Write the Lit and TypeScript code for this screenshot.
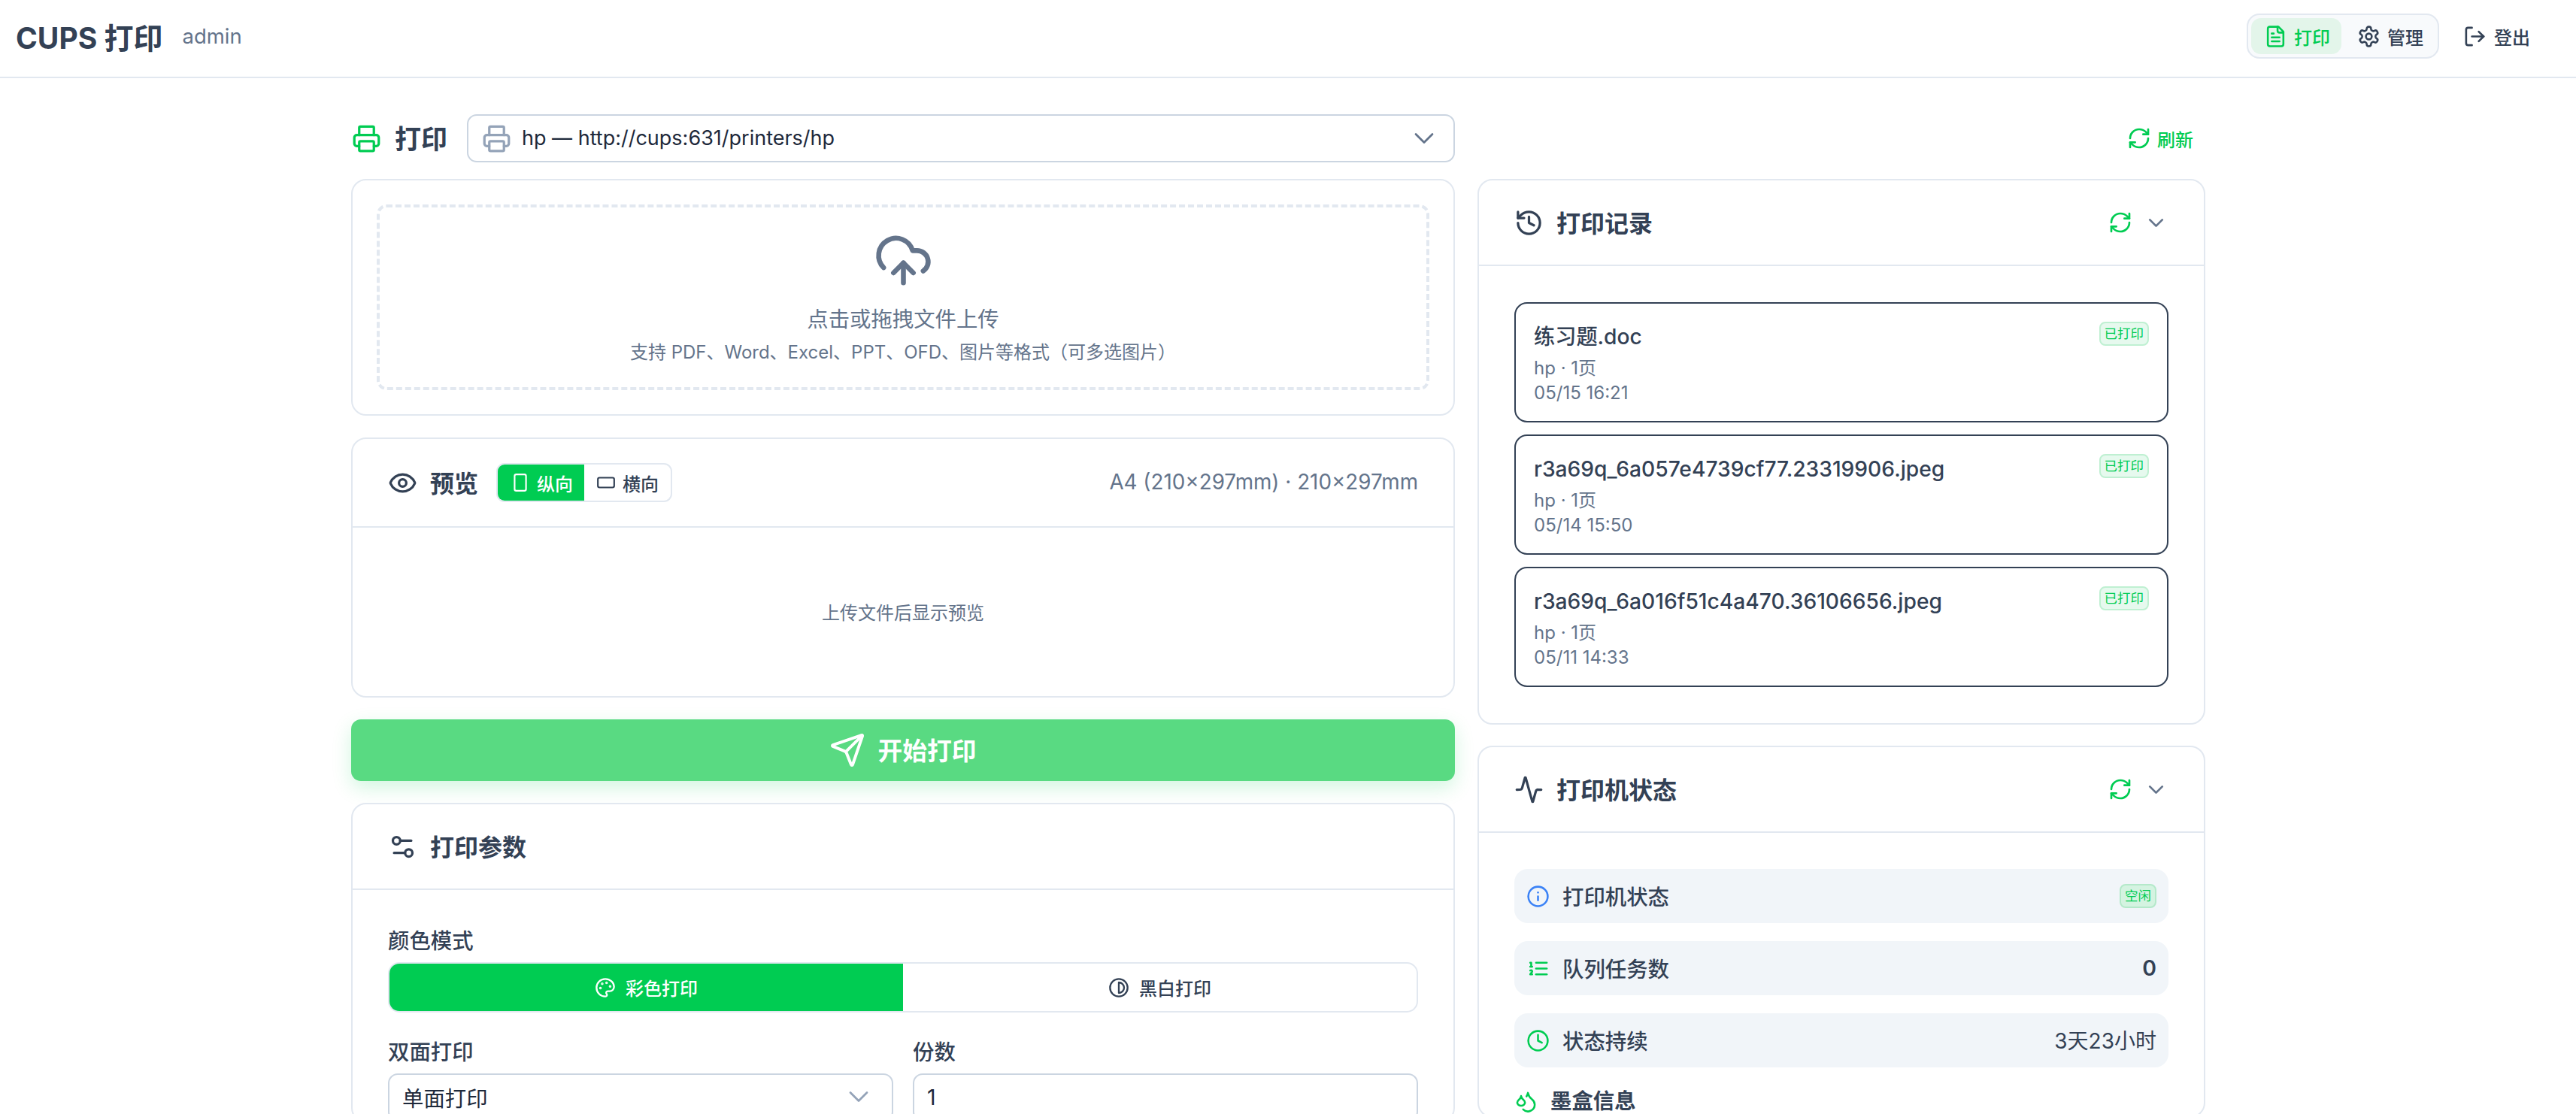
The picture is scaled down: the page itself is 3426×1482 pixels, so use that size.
import { LitElement, html, css, svg } from 'lit';
import { customElement } from 'lit/decorators.js';

const ICONS = {
    printer: svg`<path d="M6 18H4a2 2 0 0 1-2-2v-5a2 2 0 0 1 2-2h16a2 2 0 0 1 2 2v5a2 2 0 0 1-2 2h-2"/><path d="M6 9V3a1 1 0 0 1 1-1h10a1 1 0 0 1 1 1v6"/><rect x="6" y="14" width="12" height="8" rx="1"/>`,
    file: svg`<path d="M15 2H6a2 2 0 0 0-2 2v16a2 2 0 0 0 2 2h12a2 2 0 0 0 2-2V7Z"/><path d="M14 2v4a2 2 0 0 0 2 2h4"/><path d="M10 9H8"/><path d="M16 13H8"/><path d="M16 17H8"/>`,
    gear: svg`<path d="M12.22 2h-.44a2 2 0 0 0-2 2v.18a2 2 0 0 1-1 1.73l-.43.25a2 2 0 0 1-2 0l-.15-.08a2 2 0 0 0-2.73.73l-.22.38a2 2 0 0 0 .73 2.73l.15.1a2 2 0 0 1 1 1.72v.51a2 2 0 0 1-1 1.74l-.15.09a2 2 0 0 0-.73 2.73l.22.38a2 2 0 0 0 2.73.73l.15-.08a2 2 0 0 1 2 0l.43.25a2 2 0 0 1 1 1.73V20a2 2 0 0 0 2 2h.44a2 2 0 0 0 2-2v-.18a2 2 0 0 1 1-1.73l.43-.25a2 2 0 0 1 2 0l.15.08a2 2 0 0 0 2.73-.73l.22-.39a2 2 0 0 0-.73-2.73l-.15-.08a2 2 0 0 1-1-1.74v-.5a2 2 0 0 1 1-1.74l.15-.09a2 2 0 0 0 .73-2.73l-.22-.38a2 2 0 0 0-2.73-.73l-.15.08a2 2 0 0 1-2 0l-.43-.25a2 2 0 0 1-1-1.73V4a2 2 0 0 0-2-2z"/><circle cx="12" cy="12" r="3"/>`,
    logout: svg`<path d="m16 17 5-5-5-5"/><path d="M21 12H9"/><path d="M9 21H5a2 2 0 0 1-2-2V5a2 2 0 0 1 2-2h4"/>`,
    refresh: svg`<path d="M3 12a9 9 0 0 1 9-9 9.75 9.75 0 0 1 6.74 2.74L21 8"/><path d="M21 3v5h-5"/><path d="M21 12a9 9 0 0 1-9 9 9.75 9.75 0 0 1-6.74-2.74L3 16"/><path d="M8 16H3v5"/>`,
    chevron: svg`<path d="m6 9 6 6 6-6"/>`,
    upload: svg`<path d="M12 13v8"/><path d="M4 14.899A7 7 0 1 1 15.71 8h1.79a4.5 4.5 0 0 1 2.5 8.242"/><path d="m8 17 4-4 4 4"/>`,
    eye: svg`<path d="M2.062 12.348a1 1 0 0 1 0-.696 10.75 10.75 0 0 1 19.876 0 1 1 0 0 1 0 .696 10.75 10.75 0 0 1-19.876 0"/><circle cx="12" cy="12" r="3"/>`,
    phone: svg`<rect x="5" y="2" width="14" height="20" rx="2"/>`,
    landscape: svg`<rect x="2" y="6" width="20" height="12" rx="2"/>`,
    send: svg`<path d="M14.536 21.686a.5.5 0 0 0 .937-.024l6.5-19a.496.496 0 0 0-.635-.635l-19 6.5a.5.5 0 0 0-.024.937l7.93 3.18a2 2 0 0 1 1.112 1.11z"/><path d="m21.854 2.147-10.94 10.939"/>`,
    sliders: svg`<path d="M14 17H5"/><path d="M19 7h-9"/><circle cx="17" cy="17" r="3"/><circle cx="7" cy="7" r="3"/>`,
    palette: svg`<path d="M12 22a1 1 0 0 1 0-20 10 9 0 0 1 10 9 5 5 0 0 1-5 5h-2.25a1.75 1.75 0 0 0-1.4 2.8l.3.4a1.75 1.75 0 0 1-1.4 2.8z"/><circle cx="13.5" cy="6.5" r=".5" fill="currentColor"/><circle cx="17.5" cy="10.5" r=".5" fill="currentColor"/><circle cx="6.5" cy="12.5" r=".5" fill="currentColor"/><circle cx="8.5" cy="7.5" r=".5" fill="currentColor"/>`,
    contrast: svg`<circle cx="12" cy="12" r="10"/><path d="M12 18a6 6 0 0 0 0-12v12z"/>`,
    history: svg`<path d="M3 12a9 9 0 1 0 9-9 9.75 9.75 0 0 0-6.74 2.74L3 8"/><path d="M3 3v5h5"/><path d="M12 7v5l4 2"/>`,
    activity: svg`<path d="M22 12h-2.48a2 2 0 0 0-1.93 1.46l-2.35 8.36a.25.25 0 0 1-.48 0L9.24 2.18a.25.25 0 0 0-.48 0l-2.35 8.36A2 2 0 0 1 4.49 12H2"/>`,
    info: svg`<circle cx="12" cy="12" r="10"/><path d="M12 16v-4"/><path d="M12 8h.01"/>`,
    list: svg`<path d="M10 12h11"/><path d="M10 18h11"/><path d="M10 6h11"/><path d="M4 10h2"/><path d="M4 6h1v4"/><path d="M6 18H4c0-1 2-2 2-3s-1-1.5-2-1"/>`,
    clock: svg`<circle cx="12" cy="12" r="10"/><path d="M12 6v6l4 2"/>`,
    droplets: svg`<path d="M7 16.3c2.2 0 4-1.83 4-3.05 0-1.16-.57-2.26-1.71-3.19S7.29 7.75 7 6.3c-.29 1.45-1.14 2.84-2.29 3.76S3 12.09 3 13.25c0 1.22 1.8 3.05 4 3.05z"/><path d="M12.56 6.6A10.97 10.97 0 0 0 14 3.02c.5 2.5 2 4.9 4 6.5s3 3.5 3 5.5a6.98 6.98 0 0 1-11.91 4.97"/>`,
};

const icon = (name: keyof typeof ICONS, cls = '') => html`
    <svg class="ic ${cls}" viewBox="0 0 24 24" fill="none" stroke="currentColor" stroke-width="2"
        stroke-linecap="round" stroke-linejoin="round">${ICONS[name]}</svg>
`;

const RECORDS = [
    { name: '练习题.doc', meta: 'hp · 1页', time: '05/15 16:21' },
    { name: 'r3a69q_6a057e4739cf77.23319906.jpeg', meta: 'hp · 1页', time: '05/14 15:50' },
    { name: 'r3a69q_6a016f51c4a470.36106656.jpeg', meta: 'hp · 1页', time: '05/11 14:33' },
];

@customElement('app-root')
export class AppRoot extends LitElement {
    static styles = css`
        :host {
            background: #fff;
            color: #334155;
            display: block;
            font-family: Inter, "Noto Sans CJK SC", sans-serif;
            height: 1482px;
            overflow: hidden;
        }

        * { box-sizing: border-box; }

        .ic { display: block; flex: none; }
        .s26 { height: 26px; width: 26px; }
        .s28 { height: 28px; width: 28px; }
        .s31 { height: 31px; width: 31px; }
        .s32 { height: 32px; width: 32px; }
        .s33 { height: 33px; width: 33px; }
        .s39 { height: 39px; width: 39px; }
        .s44 { height: 44px; width: 44px; }
        .s48 { height: 48px; width: 48px; }
        .s79 { height: 79px; width: 79px; }
        .thin { stroke-width: 1.5; }
        .green { color: #00cc52; }
        .blue { color: #3b82f6; }
        .muted { color: #64748b; }
        .faint { color: #94a3b8; }
        .lift { padding-bottom: 3px; }

        header {
            align-items: flex-start;
            border-bottom: 2px solid #e2e8f0;
            display: flex;
            height: 104px;
            justify-content: space-between;
            padding: 18px 61px 0 21px;
        }

        .brand { align-items: center; display: flex; gap: 26px; height: 60px; }
        .brand b { color: #334155; font-size: 39px; font-weight: 700; }
        .brand span { color: #64748b; font-size: 27.5px; }

        .header-right { align-items: center; display: flex; gap: 32px; }

        nav {
            background: #f8fafc;
            border: 2px solid #e2e8f0;
            border-radius: 17px;
            display: flex;
            gap: 4px;
            height: 60px;
            padding: 4px;
        }

        .nav-item, .logout {
            align-items: center;
            display: flex;
            font-size: 24px;
            font-weight: 500;
        }

        .nav-item { border-radius: 13px; gap: 9px; padding: 0 15px 0 17px; }
        .nav-item.active { background: #e3f5ea; color: #00cc52; }
        .logout { gap: 10px; height: 60px; }

        .layout {
            column-gap: 30px;
            display: grid;
            grid-template-columns: 1468px 968px;
            padding: 48px 0 0 467px;
            row-gap: 22px;
        }

        .top-left { align-items: center; display: flex; gap: 26px; height: 64px; }
        .top-title { align-items: center; display: flex; font-size: 35px; font-weight: 600; gap: 18px; padding-left: 1px; }

        .select {
            align-items: center;
            background: #fff;
            border: 2px solid #cbd5e1;
            border-radius: 13px;
            color: #1e293b;
            display: flex;
            font-size: 28.4px;
            height: 64px;
        }

        .printer-select { flex: 1; gap: 14px; padding: 0 17px 0 18px; }
        .url { flex: 1; font-size: 27px; padding-bottom: 2px; }

        .top-right { align-items: center; display: flex; justify-content: flex-end; padding-right: 16px; }
        .refresh { align-items: center; color: #00cc52; display: flex; font-size: 24px; font-weight: 500; gap: 8px; }

        .col { display: flex; flex-direction: column; gap: 29px; }
        .col.right { gap: 28px; }

        .card {
            background: #fff;
            border: 2px solid #e2e8f0;
            border-radius: 20px;
        }

        .upload { padding: 32px; }

        .drop {
            align-items: center;
            border: 4px dashed #e2e8f0;
            border-radius: 13px;
            color: #64748b;
            display: flex;
            flex-direction: column;
            height: 247px;
            padding-top: 31px;
        }

        .drop-title { font-size: 28.4px; line-height: 40px; margin-top: 19px; }
        .drop-sub { font-size: 24px; line-height: 32px; margin-top: 8px; }

        .card-head {
            align-items: center;
            border-bottom: 2px solid #e2e8f0;
            display: flex;
            height: 114px;
            padding: 0 47px;
        }

        .card-title { align-items: center; display: flex; font-size: 32px; font-weight: 600; gap: 17px; }
        .card-tools { align-items: center; display: flex; gap: 15px; margin-left: auto; }

        .preview { display: flex; flex-direction: column; height: 346px; }
        .preview .card-head { height: 118px; }
        .paper { color: #64748b; font-size: 27.8px; margin-left: auto; padding-bottom: 3px; }

        .orient {
            border: 2px solid #e2e8f0;
            border-radius: 11px;
            display: flex;
            height: 52px;
            margin-left: 24px;
            overflow: hidden;
        }

        .orient div {
            align-items: center;
            display: flex;
            font-size: 24px;
            font-weight: 500;
            gap: 9px;
            padding: 0 16px 0 16px;
        }

        .orient .on { background: #00cc52; color: #fff; padding: 0 15px 0 17px; }

        .preview-empty {
            align-items: center;
            color: #64748b;
            display: flex;
            flex: 1;
            font-size: 24px;
            justify-content: center;
            padding-bottom: 2px;
        }

        .start {
            align-items: center;
            background: #59da82;
            border-radius: 13px;
            box-shadow: 0 9px 26px rgba(0, 204, 82, .18);
            color: #fff;
            display: flex;
            font-size: 32.8px;
            font-weight: 600;
            gap: 16px;
            height: 82px;
            justify-content: center;
        }

        .params-body { padding: 48px 47px 0; }
        .field-label { font-size: 28.4px; font-weight: 500; line-height: 40px; margin-bottom: 8px; }

        .seg {
            border: 2px solid #e2e8f0;
            border-radius: 15px;
            display: grid;
            grid-template-columns: 1fr 1fr;
            height: 67px;
            margin-bottom: 33px;
            overflow: hidden;
        }

        .seg div {
            align-items: center;
            display: flex;
            font-size: 24px;
            font-weight: 500;
            gap: 13px;
            justify-content: center;
        }

        .seg .on { background: #00cc52; color: #fff; }

        .two { column-gap: 26px; display: grid; grid-template-columns: 1fr 1fr; }
        .plain { justify-content: space-between; padding: 0 22px 2px 17px; }

        .records { display: flex; flex-direction: column; gap: 16px; padding: 48px 47px 48px; }

        .record {
            border: 2px solid #334155;
            border-radius: 17px;
            display: flex;
            height: 160px;
            justify-content: space-between;
            padding: 24px 24px 0;
        }

        .record-name { font-size: 28.2px; font-weight: 500; line-height: 40px; }
        .record-meta { color: #64748b; font-size: 24px; line-height: 33px; }
        .record-meta.first { margin-top: 5px; }

        .badge {
            background: #e6f9ee;
            border: 2px solid #bff0d2;
            border-radius: 8px;
            color: #00cc52;
            font-size: 17.5px;
            height: 32px;
            line-height: 28px;
            padding: 0 5px;
        }

        .status-body { padding: 48px 47px 0; }
        .rows { display: flex; flex-direction: column; gap: 24px; }

        .row {
            align-items: center;
            background: #f1f5f9;
            border-radius: 18px;
            display: flex;
            font-size: 28.4px;
            gap: 17px;
            height: 72px;
            padding: 0 16px;
        }

        .row-label { flex: 1; font-weight: 500; padding-bottom: 2px; }
        .row-value { font-size: 28px; padding-bottom: 2px; }
        .row-value.strong { font-size: 28.4px; font-weight: 600; }
        .row .badge { background: #d4f3e1; border-color: #b4e9ca; }

        .ink-title {
            align-items: center;
            display: flex;
            font-size: 28.4px;
            font-weight: 600;
            gap: 17px;
            line-height: 40px;
            margin-top: 25px;
        }
    `;

    private renderRecord(r: typeof RECORDS[number]) {
        return html`
            <div class="record">
                <div>
                    <div class="record-name">${r.name}</div>
                    <div class="record-meta first">${r.meta}</div>
                    <div class="record-meta">${r.time}</div>
                </div>
                <span class="badge">已打印</span>
            </div>
        `;
    }

    private tools() {
        return html`
            <div class="card-tools">
                <span class="green">${icon('refresh', 's32')}</span>
                <span class="muted">${icon('chevron', 's33')}</span>
            </div>
        `;
    }

    render() {
        return html`
            <header>
                <div class="brand"><b>CUPS 打印</b><span>admin</span></div>
                <div class="header-right">
                    <nav>
                        <div class="nav-item active">${icon('file', 's31')}打印</div>
                        <div class="nav-item">${icon('gear', 's31')}管理</div>
                    </nav>
                    <div class="logout">${icon('logout', 's31')}登出</div>
                </div>
            </header>

            <div class="layout">
                <div class="top-left">
                    <div class="top-title">
                        <span class="green">${icon('printer', 's39')}</span>
                        <span class="lift">打印</span>
                    </div>
                    <div class="select printer-select">
                        <span class="faint">${icon('printer', 's39')}</span>
                        <span class="url">hp — http://cups:631/printers/hp</span>
                        <span class="muted">${icon('chevron', 's44 thin')}</span>
                    </div>
                </div>
                <div class="top-right">
                    <div class="refresh">${icon('refresh', 's32')}刷新</div>
                </div>

                <div class="col">
                    <div class="card upload">
                        <div class="drop">
                            ${icon('upload', 's79')}
                            <div class="drop-title">点击或拖拽文件上传</div>
                            <div class="drop-sub">支持 PDF、Word、Excel、PPT、OFD、图片等格式（可多选图片）</div>
                        </div>
                    </div>

                    <div class="card preview">
                        <div class="card-head">
                            <div class="card-title">${icon('eye', 's39')}<span class="lift">预览</span></div>
                            <div class="orient">
                                <div class="on">${icon('phone', 's26')}纵向</div>
                                <div>${icon('landscape', 's26')}横向</div>
                            </div>
                            <div class="paper">A4 (210×297mm) · 210×297mm</div>
                        </div>
                        <div class="preview-empty">上传文件后显示预览</div>
                    </div>

                    <div class="start">${icon('send', 's48')}<span class="lift">开始打印</span></div>

                    <div class="card">
                        <div class="card-head">
                            <div class="card-title">${icon('sliders', 's39')}<span class="lift">打印参数</span></div>
                        </div>
                        <div class="params-body">
                            <div class="field-label">颜色模式</div>
                            <div class="seg">
                                <div class="on">${icon('palette', 's28')}彩色打印</div>
                                <div>${icon('contrast', 's28')}黑白打印</div>
                            </div>
                            <div class="two">
                                <div>
                                    <div class="field-label">双面打印</div>
                                    <div class="select plain">
                                        单面打印
                                        <span class="faint">${icon('chevron', 's44 thin')}</span>
                                    </div>
                                </div>
                                <div>
                                    <div class="field-label">份数</div>
                                    <div class="select plain">1</div>
                                </div>
                            </div>
                        </div>
                    </div>
                </div>

                <div class="col right">
                    <div class="card">
                        <div class="card-head">
                            <div class="card-title">${icon('history', 's39')}<span class="lift">打印记录</span></div>
                            ${this.tools()}
                        </div>
                        <div class="records">${RECORDS.map(r => this.renderRecord(r))}</div>
                    </div>

                    <div class="card">
                        <div class="card-head">
                            <div class="card-title">${icon('activity', 's39')}<span class="lift">打印机状态</span></div>
                            ${this.tools()}
                        </div>
                        <div class="status-body">
                            <div class="rows">
                                <div class="row">
                                    <span class="blue">${icon('info', 's31')}</span>
                                    <span class="row-label">打印机状态</span>
                                    <span class="badge">空闲</span>
                                </div>
                                <div class="row">
                                    <span class="green">${icon('list', 's31')}</span>
                                    <span class="row-label">队列任务数</span>
                                    <span class="row-value strong">0</span>
                                </div>
                                <div class="row">
                                    <span class="green">${icon('clock', 's31')}</span>
                                    <span class="row-label">状态持续</span>
                                    <span class="row-value">3天23小时</span>
                                </div>
                            </div>
                            <div class="ink-title"><span class="green">${icon('droplets', 's31')}</span>墨盒信息</div>
                        </div>
                    </div>
                </div>
            </div>
        `;
    }
}
